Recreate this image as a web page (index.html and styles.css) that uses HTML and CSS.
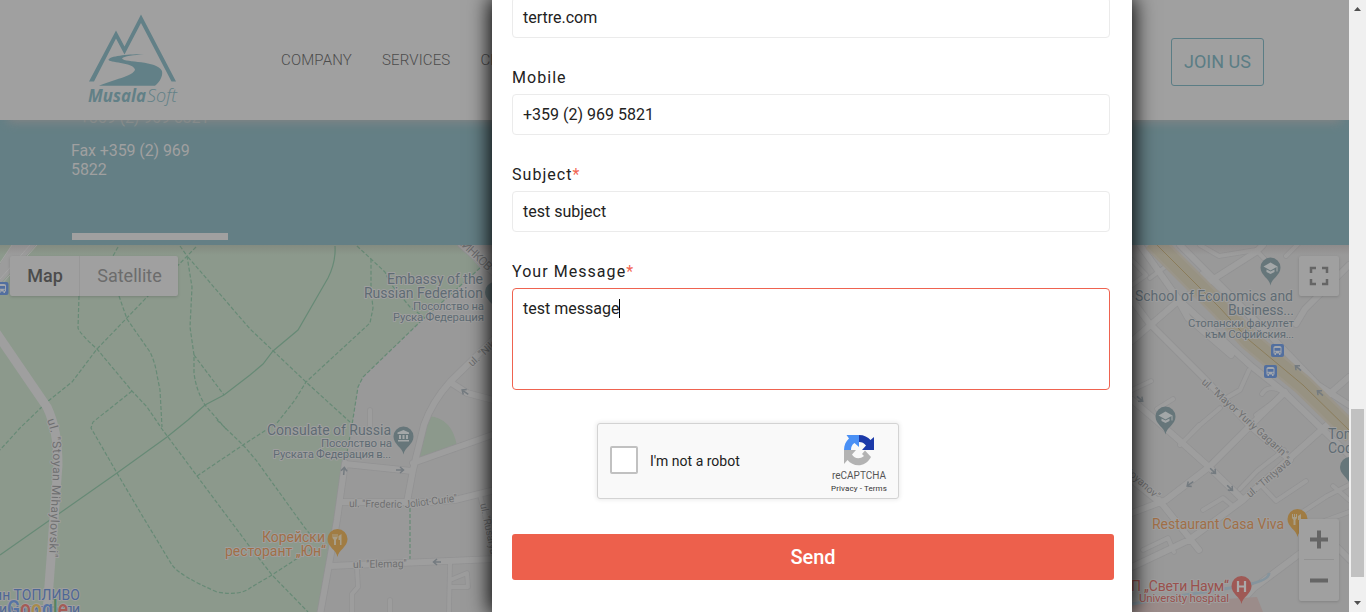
FILE: index.html
```html
<!DOCTYPE html>
<html lang="en">
<head>
<meta charset="utf-8">
<title>Musala Soft - Contact us</title>
<link rel="stylesheet" href="styles.css">
</head>
<body>
<div class="site">
  <header class="header">
    <svg class="logo" viewBox="86 12 92 94" width="92" height="94">
      <path d="M89 81.500L116 30.500L124.500 46.500L141 14.500L176 81.500H171.500L141 23L124.500 54.500L116 38.500L94 81.500Z"/>
      <path d="M144 54.200C128 54 110 56 108.500 59.500C108 63 133 62 135 69.500C134 76 112 80 99 85.700H155C160 82 163 76 162 71C157 60 125 63 122 58.500C123 56 135 55 144 54.200Z"/>
      <text x="88" y="102" class="logo-bold" textLength="58" lengthAdjust="spacingAndGlyphs">Musala</text>
      <text x="147" y="102" class="logo-light" textLength="30" lengthAdjust="spacingAndGlyphs">Soft</text>
    </svg>
    <nav class="nav"><a>COMPANY</a><a>SERVICES</a><a>CLIENTS</a></nav>
    <a class="join">JOIN US</a>
  </header>
  <section class="contact">
    <p class="phone">+359 (2) 969 5821</p>
    <p>Fax +359 (2) 969 5822</p>
    <div class="rule"></div>
  </section>
  <section class="map">
    <svg class="map-canvas" viewBox="0 245 1349 367" width="1349" height="367">
      <defs>
        <g id="pin"><path d="M0 18C-1 11-10 8-10 0A10 10 0 1 1 10 0C10 8 1 11 0 18Z"/></g>
        <g id="cap" fill="#a3a7a8"><path d="M-7-1L0-5L7-1L0 3Z"/><path d="M-4 2V4.500L0 6.500L4 4.500V2L0 4ZM6-1H7V4H6Z"/></g>
        <g id="fork" fill="#a89e88"><path d="M-5-5H-4V-2H-3V-5H-2V-2H-1V-5H0V-1L-1.500 1V6H-3.500V1L-5-1ZM4-5V6H2.500V1H1V-3Z"/></g>
        <g id="bus"><rect x="-6.500" y="-6.500" width="13" height="13" rx="2" fill="#526f9f"/><path fill="#a3a7ad" d="M-4-3Q-4-4.500-2-4.500H2Q4-4.500 4-3V3H3V4.500H1.500V3H-1.500V4.500H-3V3H-4Z"/><path fill="#526f9f" d="M-3-2.500H3V.300H-3ZM-3 1.200H-1.700V2.300H-3ZM1.700 1.200H3V2.300H1.700Z"/></g>
        <path id="arr" d="M-4 0H3M0-3L3.500 0L0 3"/>
        <g id="roads">
          <path d="M345 463L337 520L320 615M345 464L412 471M343 502H430L455 500L495 490M330 566L495 559M497 336L450 382Q432 402 424 425L413 470L407 502M450 382L467 393L497 401M413 463L495 434"/>
          <path d="M1132 341L1176 303L1256 252L1263 245M1132 300L1149 323L1203 377L1249 425L1290 460M1179 302L1188 318L1231 355M1140 245L1179 300L1250 365L1284 392L1349 455M1180 245L1260 325L1318 385L1349 405M1296 324L1305 309L1349 265M1325 398L1349 377M1285 392L1249 427L1209 467L1166 500L1132 513M1328 424L1243 500L1189 540L1132 567M1132 400L1171 433L1209 467L1243 500M1159 500L1199 550M1132 480L1163 505M1302 552L1254 588L1232 612M1335 545L1350 560"/>
        </g>
        <g id="lanes">
          <path d="M370 410V430M357 568L358 587L352 594V612M390 600V612M450 563L449 612M450 580L467 573L468 587H452M480 495L494 552M460 245L495 275"/>
          <path d="M1132 260L1146 275L1132 285M1150 278L1165 267M1200 245L1219 256L1256 250L1275 270M1202 273L1243 310L1260 330M1286 256L1302 240M1132 390L1151 381M1157 409L1173 399M1188 437L1199 425M1249 370L1240 390L1228 397M1262 394Q1268 383 1286 393L1256 415M1240 489L1257 471L1284 450M1260 484L1276 501L1306 481M1203 510L1223 498L1234 507M1143 550L1168 538L1174 552M1333 486L1349 500M1298 515L1327 496L1349 485M1300 530L1349 512M1180 445L1200 425L1220 408"/>
        </g>
      </defs>
      <rect y="245" width="1349" height="367" fill="#999"/>
      <path class="park" d="M0 245H460L480 268L420 322L363 377L358 387L352 425L337 520L320 612H0ZM429 416Q452 418 457 446L419 459Z"/>
      <path fill="#9c9c9c" d="M12 245H36L0 284V264Z"/>
      <path class="edge" d="M37 245L0 286M30 245L0 279M12 245L0 263"/>
      <g class="trail">
        <path d="M118 247L113 256"/>
        <path d="M180 246L187 256L192 287L190 327L194 355V373Q196 390 205 405L227 430"/>
        <path d="M196 247L148 296L97 349L72 382L47 402L20 428L0 450"/>
        <path d="M188 257L250 329L306 382L350 422"/>
        <path d="M194 355L224 395"/>
        <path d="M79 296L78 328Q80 334 97 349L132 391L147 407L162 429L197 476L250 547L272 575L308 612"/>
        <path d="M119 296L127 319L150 352Q155 362 157 375L160 390L162 427"/>
        <path d="M132 391L93 422L91 428L117 473L143 517L172 565Q180 576 217 592Q240 596 250 588L272 575L313 548"/>
        <path d="M217 420L243 445L256 460L305 528L315 540"/>
        <path d="M197 476L243 445L277 423L295 400L306 382L370 323L373 308L371 290V257"/>
        <path d="M357 246L385 272L390 283L410 307L425 318"/>
        <path d="M480 268L420 322L363 377L358 387L352 425L346 458M410 508V560"/>
        <path class="solid" d="M0 555L117 473L167 437L188 420L205 405L224 395L250 375L263 364L273 351L298 330L328 278Q336 262 335 246"/>
      </g>
      <path class="main-road" d="M-5 331L47 407Q58 430 58 465L52 545L47 612"/>
      <g class="roads">
        <use href="#lanes" class="lane-edge"/><use href="#roads" class="road-edge"/>
        <use href="#lanes" class="lane"/><use href="#roads" class="road"/>
      </g>
      <g fill="none" stroke-linejoin="round">
        <path stroke="#9a958a" stroke-width="21" d="M1153 241L1220 308L1249 340L1303 385L1353 434"/>
        <path stroke="#979282" stroke-width="16" d="M1153 241L1220 308L1249 340L1303 385L1353 434"/>
        <path stroke="#8b7d5c" d="M1153 241L1220 308L1249 340L1303 385L1353 434"/>
      </g>
      <path d="M1132 605L1190 595L1210 600L1257 597L1263 612H1132Z" fill="#9b8c8a"/>
      <path d="M1132 604Q1190 594 1230 588T1269 573" fill="none" stroke="#85949d" stroke-width="3"/>
      <g class="arrows">
        <use href="#arr" transform="translate(344 471) rotate(-85)"/>
        <use href="#arr" transform="translate(400 470)"/>
        <use href="#arr" transform="translate(437 562) rotate(180)"/>
        <use href="#arr" transform="translate(465 392) rotate(215)"/>
        <use href="#arr" transform="translate(1140 399) rotate(40)"/>
        <use href="#arr" transform="translate(1298 368) rotate(222)"/>
        <use href="#arr" transform="translate(1320 393) rotate(222)"/>
        <use href="#arr" transform="translate(1213 471) rotate(45)"/>
        <use href="#arr" transform="translate(1230 488) rotate(45)"/>
        <use href="#arr" transform="translate(1190 484) rotate(145)"/>
      </g>
      <g class="street">
        <path id="st1" d="M47 420Q54 438 53 465L49 561" fill="none" stroke="none"/>
        <text class="big"><textPath href="#st1" textLength="138">ul. "Stoyan Mihaylovski"</textPath></text>
        <text transform="translate(349 507) rotate(1)" textLength="53">ul. "Frederic</text>
        <text transform="translate(405 508) rotate(-7)" textLength="53">Joliot-Curie"</text>
        <text transform="translate(353 568) rotate(-1)" textLength="54">ul. "Elemag"</text>
        <text transform="translate(472 367) rotate(-42)">ul. "Nikola"</text>
        <text transform="translate(480 504) rotate(78)" textLength="52">ul. "Rusarya</text>
        <text transform="translate(456 241) rotate(44)" textLength="44" class="big">ЧИНКОВ</text>
        <text transform="translate(1201 383) rotate(42)" textLength="112">ul. "Mayor Yuriy Gagarin"</text>
        <text transform="translate(1250 498) rotate(-40)" textLength="57">ul. "Tintyava"</text>
        <text transform="translate(1122 469) rotate(42)" textLength="46">Stoyanov"</text>
      </g>
      <g class="place">
        <text x="387" y="284" textLength="96">Embassy of the</text>
        <text x="364" y="298" textLength="119">Russian Federation</text>
        <text x="413" y="310" textLength="71" class="small">Посолство на</text>
        <text x="393" y="321" textLength="91" class="small">Руска Федерация</text>
        <text x="267" y="435" textLength="124">Consulate of Russia</text>
        <text x="321" y="447" textLength="71" class="small">Посолство на</text>
        <text x="273" y="458" textLength="118" class="small">Руската Федерация в...</text>
        <text x="1135" y="301" textLength="158">School of Economics and</text>
        <text x="1228" y="315" textLength="66">Business...</text>
        <text x="1188" y="327" textLength="106" class="small">Стопански факултет</text>
        <text x="1205" y="338" textLength="89" class="small">към Софийския...</text>
        <text x="1328" y="439">Tom</text>
        <text x="1328" y="453">Coding</text>
        <g class="orange">
          <text x="262" y="542" textLength="63">Корейски</text>
          <text x="225" y="556" textLength="101">ресторант „Юн“</text>
          <text x="1152" y="529" textLength="132">Restaurant Casa Viva</text>
        </g>
        <g class="red">
          <text x="1131" y="591" textLength="98">П „Свети Наум“</text>
          <text x="1139" y="602" textLength="90" class="small">University hospital</text>
        </g>
        <g class="blue">
          <text x="-6" y="600" textLength="86">ин ТОПЛИВО</text>
          <text x="-1" y="614" textLength="81">и магистрали</text>
        </g>
      </g>
      <text class="google" x="7" y="617" textLength="61" lengthAdjust="spacingAndGlyphs"><tspan fill="#5673a3">G</tspan><tspan fill="#a45b55">o</tspan><tspan fill="#a88b4b">o</tspan><tspan fill="#5673a3">g</tspan><tspan fill="#55845f">l</tspan><tspan fill="#a45b55">e</tspan></text>
      <g fill="#66767a">
        <use href="#pin" x="403.500" y="436.500"/><use href="#pin" x="495" y="292"/>
        <use href="#pin" x="1270.500" y="267.500"/><use href="#pin" x="1165.500" y="416.500"/><use href="#pin" x="1350" y="467"/>
      </g>
      <path fill="#a3a7a8" d="M397.500 434V432.500L403.500 430L409 432.500V434ZM399 435H401V439H399ZM402.500 435H404.500V439H402.500ZM406 435H408V439H406ZM398 440H409V441.500H398Z"/>
      <use href="#cap" x="1270.500" y="267.500"/><use href="#cap" x="1165.500" y="416.500"/>
      <g fill="#a07c43"><use href="#pin" x="337.500" y="539"/><use href="#pin" x="1297.500" y="519"/></g>
      <use href="#fork" x="337.500" y="539"/><use href="#fork" x="1297" y="519"/>
      <use href="#pin" x="1241.500" y="586" fill="#9f5955"/>
      <path d="M1238 581V592M1245 581V592M1238 586.500H1245" stroke="#aaa" stroke-width="2.200"/>
      <use href="#bus" x="2" y="288.500"/><use href="#bus" x="1277.500" y="350.500"/><use href="#bus" x="1270.500" y="371.500"/>
    </svg>
    <div class="map-types"><span class="on">Map</span><span>Satellite</span></div>
    <div class="full"><svg width="20" height="20" viewBox="0 0 20 20"><path d="M2 7V2H7M13 2H18V7M18 13V18H13M7 18H2V13"/></svg></div>
    <div class="zoom"><svg width="40" height="82" viewBox="0 0 40 82"><path d="M11 20.500H29M20 11.500V29.500M11 61.500H29"/><path class="sep" d="M5 40.500H35"/></svg></div>
  </section>
</div>
<div class="scrollbar">
  <svg width="17" height="17" viewBox="0 0 17 17"><path d="M5 11L8.500 7L12 11Z"/></svg>
  <div class="thumb"></div>
  <svg width="17" height="17" viewBox="0 0 17 17"><path d="M5 6L8.500 10L12 6Z"/></svg>
</div>
<form class="dialog">
  <div class="field first">tertre.com</div>
  <label>Mobile</label>
  <div class="field">+359 (2) 969 5821</div>
  <label>Subject<b>*</b></label>
  <div class="field">test subject</div>
  <label>Your Message<b>*</b></label>
  <div class="field area">test message<i class="caret"></i></div>
  <div class="captcha">
    <span class="check"></span>
    <span class="robot">I'm not a robot</span>
    <div class="brand">
      <svg width="32" height="32" viewBox="0 0 32 32">
        <path fill="#1c3aa9" d="M16 1C21 1 25 3 27.500 6L31 3V16H19L23 11.500C21 9 19 8 16 8Z"/>
        <path fill="#4a90f5" d="M1 16C1 11 3 7 6 4.500L3.500 1H16V13L11.500 9C9 10.500 8 13 8 16Z"/>
        <path fill="#b3b3b3" d="M1 16H13L9 20.500C11 24 16 26 21 22L19 20L22 16.500L28 23C22 34 10 33 4.500 26L1 30Z"/>
      </svg>
      <span class="name">reCAPTCHA</span>
      <span class="terms">Privacy - Terms</span>
    </div>
  </div>
  <button type="button" class="send">Send</button>
</form>
</body>
</html>
```

FILE: styles.css
```css
* { box-sizing: border-box; }
body { margin: 0; width: 1366px; height: 612px; overflow: hidden; display: flex; position: relative; font-family: Roboto, "Liberation Sans", sans-serif; background: #a0a0a0; }
.site { width: 1349px; height: 612px; overflow: hidden; display: grid; grid-template-rows: 120px 125px 367px; }

.header { display: flex; align-items: flex-start; background: #a0a0a0; padding: 12px 85px 0 86px; box-shadow: 0 10px 10px -8px #858585; z-index: 1; }
.logo { fill: #628087; flex: none; }
.logo text { font-family: "Open Sans", "Noto Sans", sans-serif; font-style: italic; font-size: 18px; }
.logo-bold { font-weight: 700; }
.logo-light { font-weight: 300; }
.nav { display: flex; gap: 30px; margin: 38px 0 0 103px; font-size: 15px; line-height: 20px; color: #4c4c4c; font-weight: 300; letter-spacing: .15px; }
.join { margin: 26px 0 0 auto; width: 93px; height: 48px; border: 1px solid #5b7d85; border-radius: 3px; color: #5b7d85; font-size: 18px; line-height: 46px; text-align: center; }

.contact { background: #647f85; color: #a0a0a0; padding: 0 72px; overflow: hidden; }
.contact p { margin: 0 0 0 -1px; width: 140px; font-size: 16px; line-height: 19px; letter-spacing: -.1px; }
.contact .phone { margin: -12px 0 14px 8px; color: #87908f; }
.rule { margin-top: 54px; width: 156px; height: 7px; background: #a0a0a0; }

.map { position: relative; }
.map::after { content: ""; position: absolute; inset: 0 0 auto; height: 10px; background: linear-gradient(rgba(90,75,75,.18), transparent); }
.map-canvas { display: block; }
.park { fill: #8c998c; }
.edge { fill: none; stroke: #a5a5a5; }
.trail { fill: none; stroke: #678a76; stroke-width: 1.200; stroke-dasharray: 4 2; }
.trail .solid { stroke-dasharray: none; }
.main-road { fill: none; stroke: #9f9f9f; stroke-width: 9; stroke-linejoin: round; }
.roads { fill: none; stroke-linejoin: round; stroke-linecap: round; }
.road-edge { stroke: #929293; stroke-width: 7.500; }
.road { stroke: #9e9e9e; stroke-width: 6; }
.lane-edge { stroke: #929293; stroke-width: 5.500; }
.lane { stroke: #9d9d9d; stroke-width: 4; }
.map-canvas text { paint-order: stroke; stroke: #9f9f9f; stroke-width: 2px; stroke-linejoin: round; }
.street text { font-size: 10.500px; fill: #6f7071; }
.street .big { font-size: 12px; }
.place text { font-size: 14px; fill: #5f6c74; }
.place .small { font-size: 11.500px; }
.place .orange text { fill: #a16f47; }
.place .red text { fill: #9a514d; }
.place .blue text { fill: #4e6795; }
.map-canvas .google { font-size: 23px; font-weight: 500; }
.arrows { fill: none; stroke: #747b80; stroke-width: 1.500; }
.map-types, .full, .zoom { position: absolute; background: #a0a0a0; border-radius: 2px; box-shadow: 0 1px 3px rgba(0,0,0,.15); }
.map-types { left: 10px; top: 11px; display: flex; font-size: 18px; line-height: 40px; color: #6c6c6c; }
.map-types span { width: 98px; padding-left: 1px; text-align: center; }
.map-types .on { width: 70px; font-weight: 500; color: #4c4c4c; border-right: 1px solid #979797; }
.full { right: 10px; top: 11px; width: 40px; height: 40px; padding: 10px; }
.full svg { display: block; }
.full path, .zoom path { fill: none; stroke: #656565; stroke-width: 2.500; }
.zoom { right: 10px; top: 274px; width: 40px; height: 82px; }
.zoom path { stroke-width: 4; }
.zoom .sep { stroke-width: 1; stroke: #929292; }

.scrollbar { width: 17px; height: 612px; background: #f0f0f0; display: flex; flex-direction: column; justify-content: space-between; }
.scrollbar svg { fill: #505050; display: block; flex: none; }
.thumb { width: 13px; height: 168px; margin: 374px 2px 0; background: #c1c1c1; }

.dialog { position: absolute; z-index: 2; left: 492px; top: 0; width: 640px; height: 612px; background: #fff; padding: 0 18px 0 20px; box-shadow: 0 0 20px 2px #000; color: #222; clip-path: inset(0 -40px); }
.dialog label { display: block; height: 56px; padding-top: 30px; font-size: 16px; line-height: 20px; letter-spacing: 1.050px; }
.dialog label b { color: #f26552; font-weight: 400; }
.field { width: 598px; height: 41px; border: 1px solid #ebebeb; border-radius: 4px; padding: 0 10px; font-size: 16px; line-height: 39px; }
.first { margin-top: -3px; }
.area { height: 102px; border-color: #ef6350; display: flex; align-items: flex-start; }
.caret { width: 1px; height: 19px; margin-top: 10px; background: #000; }
.captcha { width: 302px; height: 76px; margin: 33px 0 0 85px; padding: 0 10px 0 12px; border: 1px solid #d3d3d3; border-radius: 3px; background: #f9f9f9; box-shadow: 0 0 4px 1px rgba(0,0,0,.08); display: flex; align-items: center; }
.check { width: 28px; height: 28px; border: 2px solid #c1c1c1; border-radius: 2px; background: #fff; margin-top: -2px; }
.robot { margin-left: 12px; font-size: 14px; }
.brand { margin-left: auto; width: 58px; height: 76px; padding-top: 11px; display: flex; flex-direction: column; align-items: center; color: #555; white-space: nowrap; }
.brand .name { font-size: 10px; line-height: 12px; margin-top: 4px; }
.brand .terms { font-size: 8px; line-height: 10px; margin-top: 2px; color: #333; letter-spacing: .1px; }
.send { display: block; width: 602px; height: 46px; margin-top: 35px; border: 0; border-radius: 3px; background: #ed604c; color: #fff; font: 500 20px/46px Roboto, sans-serif; padding: 0; }
```
